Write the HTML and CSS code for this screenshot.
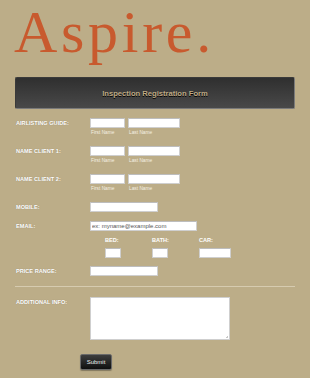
FILE: index.html
```html
<!DOCTYPE html>
<html>
<head>
<meta charset="utf-8">
<link rel="stylesheet" href="styles.css">
</head>
<body>
<h1 class="logo">Aspire.</h1>
<div class="form-head">Inspection Registration Form</div>
<form class="form">
  <div class="row name">
    <div class="label">Airlisting Guide:</div>
    <div class="field"><input class="in first" type="text"><span class="sub">First Name</span></div>
    <div class="field"><input class="in last" type="text"><span class="sub">Last Name</span></div>
  </div>
  <div class="row name">
    <div class="label">Name Client 1:</div>
    <div class="field"><input class="in first" type="text"><span class="sub">First Name</span></div>
    <div class="field"><input class="in last" type="text"><span class="sub">Last Name</span></div>
  </div>
  <div class="row name">
    <div class="label">Name Client 2:</div>
    <div class="field"><input class="in first" type="text"><span class="sub">First Name</span></div>
    <div class="field"><input class="in last" type="text"><span class="sub">Last Name</span></div>
  </div>
  <div class="row mobile">
    <div class="label">Mobile:</div>
    <input class="in mid" type="text">
  </div>
  <div class="row email">
    <div class="label">Email:</div>
    <input class="in wide" type="text" placeholder="ex: myname@example.com">
  </div>
  <div class="amen">
    <div class="col"><span class="alabel">Bed:</span><input class="in small" type="text"></div>
    <div class="col"><span class="alabel">Bath:</span><input class="in small" type="text"></div>
    <div class="col"><span class="alabel">Car:</span><input class="in car" type="text"></div>
  </div>
  <div class="row price">
    <div class="label">Price Range:</div>
    <input class="in mid" type="text">
  </div>
  <hr class="sep">
  <div class="row info">
    <div class="label">Additional Info:</div>
    <textarea class="ta"></textarea>
  </div>
  <div class="actions"><button class="submit" type="button">Submit</button></div>
</form>
</body>
</html>
```
FILE: styles.css
```css
html, body {
  margin: 0;
  padding: 0;
}
body {
  background: #bcad88;
  width: 310px;
  height: 378px;
  overflow: hidden;
  font-family: "Liberation Sans", Arial, sans-serif;
}
.logo {
  margin: 0 0 15px 0;
  padding: 2px 0 0 14px;
  font-family: "Liberation Serif", "Times New Roman", serif;
  font-weight: normal;
  font-size: 60px;
  line-height: 60px;
  letter-spacing: 3.7px;
  color: #c85a2e;
}
.form-head {
  margin: 0 15px;
  height: 32px;
  box-sizing: border-box;
  background: linear-gradient(#2f2f2f, #494949);
  border: 1px solid #3a3a3a;
  border-right-color: #7a7a7a;
  border-bottom-color: #7a7a7a;
  border-radius: 2px;
  display: flex;
  align-items: center;
  justify-content: center;
  color: #bfaa84;
  font-weight: bold;
  font-size: 7.6px;
  text-shadow: 0 1px 0 #000;
}
.form {
  margin: 9px 0 0 0;
  padding: 0 15px 0 16px;
}
.row {
  display: flex;
  align-items: flex-start;
}
.label {
  width: 74px;
  flex: none;
  height: 10px;
  line-height: 10px;
  color: #fff;
  font-weight: bold;
  font-size: 5.6px;
  text-transform: uppercase;
  text-shadow: 0 0 1px rgba(0,0,0,0.25);
  white-space: nowrap;
}
.field {
  display: flex;
  flex-direction: column;
  margin-right: 3px;
}
.in {
  box-sizing: border-box;
  height: 10px;
  margin: 0;
  padding: 0 1px;
  border: 1px solid #cfcfcf;
  border-top-color: #bdbdbd;
  background: #fff;
  font-family: "Liberation Sans", Arial, sans-serif;
  font-size: 6px;
  color: #555;
  outline: none;
  display: block;
}
.in::placeholder {
  color: #555;
  opacity: 1;
}
.first { width: 35px; }
.last { width: 52px; }
.mid { width: 68px; }
.wide { width: 107px; }
.small { width: 16px; }
.car { width: 32px; }
.sub {
  margin-top: 1px;
  height: 7px;
  line-height: 7px;
  padding-left: 1px;
  font-size: 4.8px;
  color: #f4efe2;
}
.name { margin-bottom: 10px; }
.mobile { margin-bottom: 9px; }
.email { margin-bottom: 6px; }
.amen {
  display: flex;
  margin-left: 89px;
  margin-bottom: 8px;
}
.col {
  width: 47px;
  display: flex;
  flex-direction: column;
  align-items: flex-start;
}
.alabel {
  height: 6px;
  line-height: 6px;
  margin-bottom: 5px;
  color: #fff;
  font-weight: bold;
  font-size: 5.6px;
  text-transform: uppercase;
}
.price { margin-bottom: 10px; }
.sep {
  margin: 0 0 10px -1px;
  border: 0;
  height: 1px;
  background: #d6cbb0;
}
.ta {
  box-sizing: border-box;
  width: 140px;
  height: 43px;
  margin: 0;
  padding: 0;
  border: 1px solid #cfcfcf;
  background-color: #fff;
  background-image: linear-gradient(135deg, transparent 0 70%, #c8c8c8 70% 76%, transparent 76% 84%, #c8c8c8 84% 90%, transparent 90%);
  background-size: 4px 4px;
  background-position: right 1px bottom 1px;
  background-repeat: no-repeat;
  resize: none;
  display: block;
}
.actions {
  padding-left: 64px;
  margin-top: 14px;
}
.submit {
  display: block;
  width: 32px;
  height: 16px;
  padding: 0;
  box-sizing: border-box;
  background: linear-gradient(#3e3e3e, #0f0f0f);
  border: 1px solid #6a6a6a;
  border-radius: 2px;
  color: #eee;
  font-family: "Liberation Sans", Arial, sans-serif;
  font-size: 6px;
  line-height: 14px;
  box-shadow: 0 1px 1px rgba(0,0,0,0.3);
}
```
